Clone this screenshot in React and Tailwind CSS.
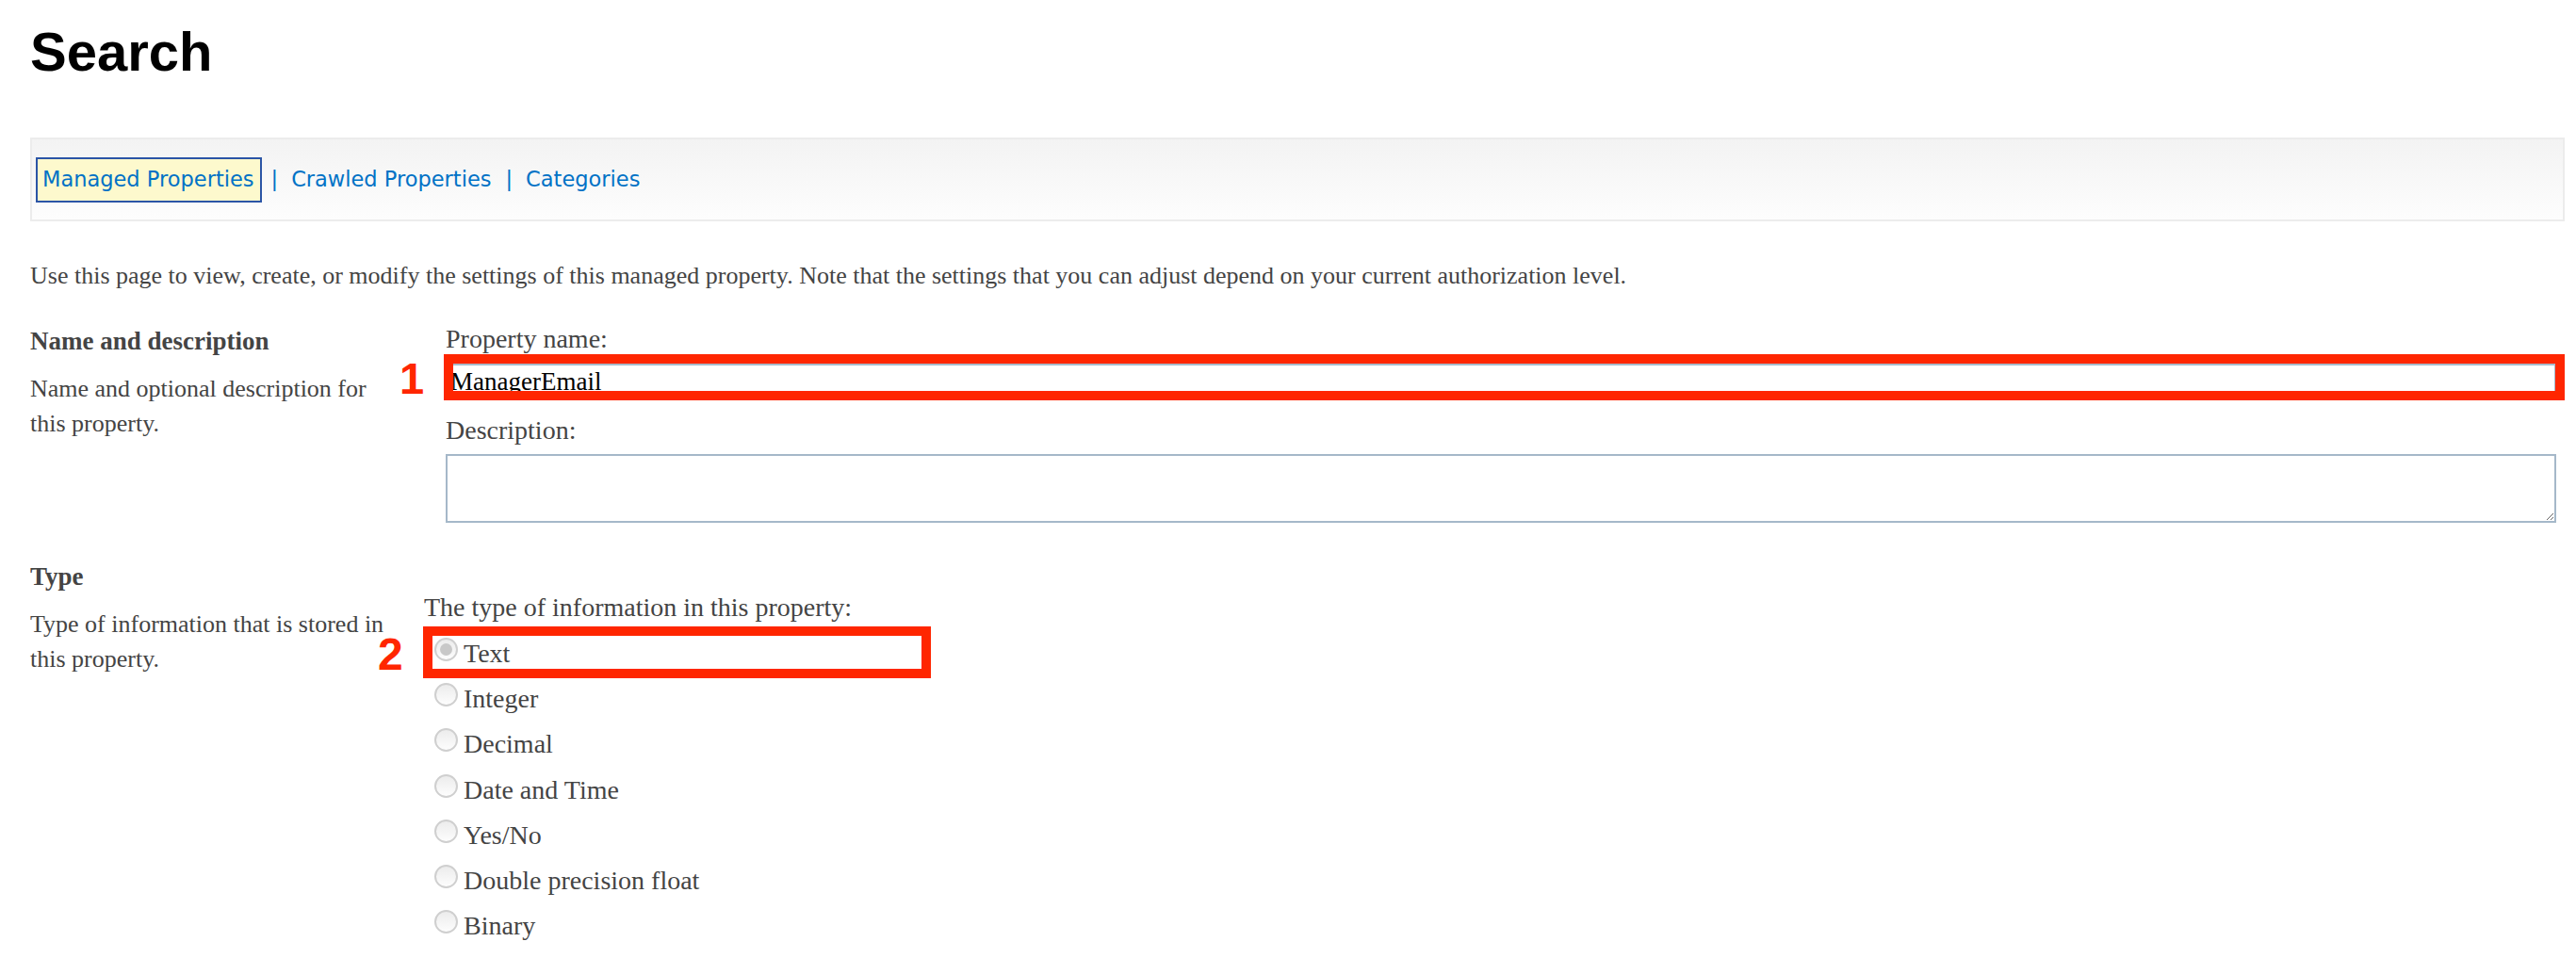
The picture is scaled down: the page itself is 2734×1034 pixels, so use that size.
import React from 'react';

const navLinks = ['Crawled Properties', 'Categories'];

const types = ['Text', 'Integer', 'Decimal', 'Date and Time', 'Yes/No', 'Double precision float', 'Binary'];

const Radio = ({ checked }) => (
    <span className="mt-[7px] flex h-[25px] w-[25px] shrink-0 items-center justify-center rounded-full border-2 border-[#cfcfcf] bg-linear-to-b from-[#ececec] to-[#fdfdfd]">
        {checked && <span className="h-[13px] w-[13px] rounded-full bg-[#c8c8c8]" />}
    </span>
);

const App = () => {
    return (
        <div className="min-h-screen bg-white pl-[32px] pr-[12px] pt-[26px] font-['Liberation_Serif',serif] text-[#444444]">
            <h1 className="font-['Liberation_Sans',Arial,sans-serif] text-[58px] font-bold leading-[58px] text-black">Search</h1>

            <nav className="mt-[62px] flex h-[89px] items-center border-2 border-[#ececec] bg-linear-to-b from-[#f3f3f3] to-[#fdfdfd] pl-[4px] font-['DejaVu_Sans',Verdana,sans-serif] text-[22.5px] text-[#0072c6]">
                <span className="flex h-[48px] items-center border-2 border-[#2b55a6] bg-[#fdf9cd] pl-[5px] pr-[6px]">
                    Managed Properties
                </span>
                {navLinks.map((link, i) => (
                    <React.Fragment key={link}>
                        <span className={i === 0 ? 'ml-[10px] mr-[14px]' : 'ml-[15px] mr-[14px]'}>|</span>
                        <a href="#" className="text-[#0072c6]">
                            {link}
                        </a>
                    </React.Fragment>
                ))}
            </nav>

            <p className="mt-[39px] text-[26px] leading-[37px]">
                Use this page to view, create, or modify the settings of this managed property. Note that the settings that you can adjust depend on your current authorization level.
            </p>

            {/* Name and description */}
            <div className="mt-[31px] grid grid-cols-[418px_1fr]">
                <div className="pr-[28px]">
                    <h3 className="mt-[2px] text-[27px] font-bold leading-[36px]">Name and description</h3>
                    <p className="mt-[14px] text-[26px] leading-[37px]">Name and optional description for this property.</p>
                </div>
                <div className="pl-[23px] pr-[9px]">
                    <div className="text-[28px] leading-[36px]">Property name:</div>
                    <div className="relative mt-[8px]">
                        <input
                            type="text"
                            defaultValue="ManagerEmail"
                            className="block h-[39px] w-full border-2 border-[#a7bacb] bg-white pl-[3px] font-['Liberation_Serif',serif] text-[27px] text-black outline-none"
                        />
                        <div className="pointer-events-none absolute bottom-0 left-[-2px] right-[-9px] top-[-10px] border-[10px] border-[#ff2600]" />
                        <span className="absolute left-[-49px] top-[-8px] font-['Liberation_Sans',Arial,sans-serif] text-[47px] font-bold leading-[48px] text-[#ff2600]">
                            1
                        </span>
                    </div>
                    <div className="mt-[14px] text-[28px] leading-[36px]">Description:</div>
                    <textarea className="mt-[7px] block h-[73px] w-full border-2 border-[#a5b8c9] bg-white outline-none" />
                </div>
            </div>

            {/* Type */}
            <div className="mt-[39px] grid grid-cols-[418px_1fr] pb-[20px]">
                <div className="pr-[28px]">
                    <h3 className="text-[27px] font-bold leading-[36px]">Type</h3>
                    <p className="mt-[14px] text-[26px] leading-[37px]">Type of information that is stored in this property.</p>
                </div>
                <div>
                    <div className="mt-[33px] text-[28px] leading-[36px]">The type of information in this property:</div>
                    <div className="relative mt-[7px]">
                        {types.map((type, i) => (
                            <div key={type} className="flex h-[48.2px] items-start pl-[11px]">
                                <Radio checked={i === 0} />
                                <span className="ml-[6px] text-[28px] leading-[48px]">{type}</span>
                            </div>
                        ))}
                        <div className="pointer-events-none absolute left-[-1px] top-[-5px] h-[55px] w-[539px] border-[10px] border-[#ff2600]" />
                        <span className="absolute left-[-49px] top-[1px] font-['Liberation_Sans',Arial,sans-serif] text-[48px] font-bold leading-[48px] text-[#ff2600]">
                            2
                        </span>
                    </div>
                </div>
            </div>
        </div>
    );
};

export default App;
